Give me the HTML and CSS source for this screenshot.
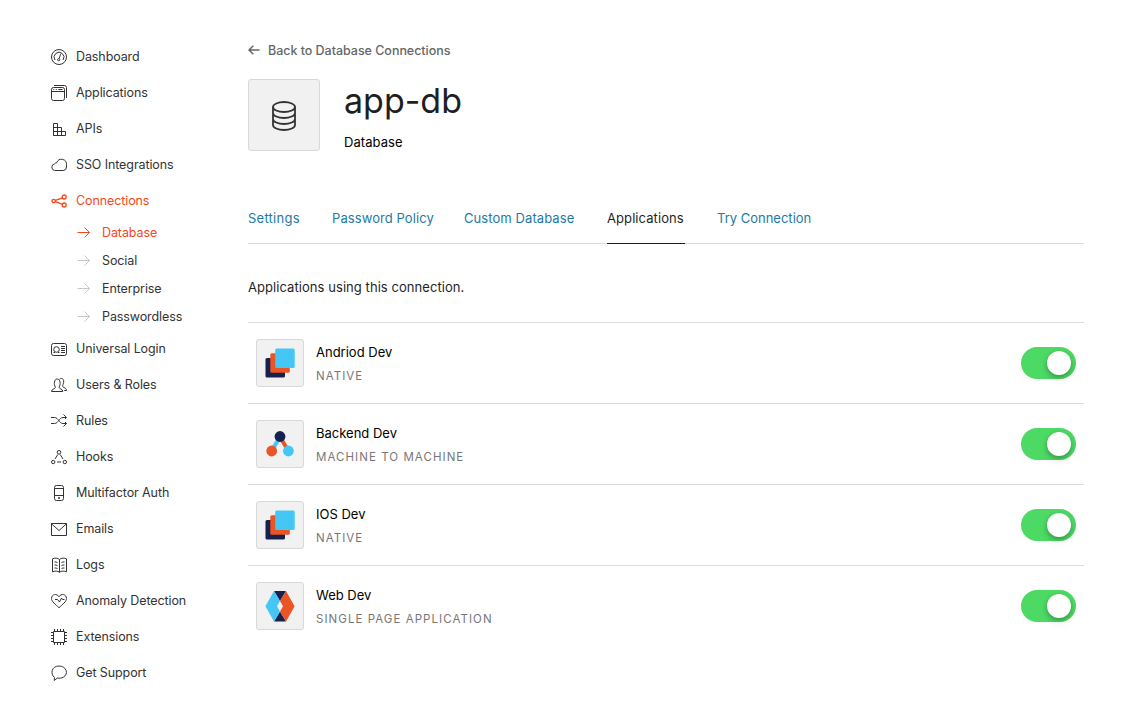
FILE: index.html
```html
<!DOCTYPE html>
<html lang="en">
<head>
<meta charset="utf-8">
<title>app-db</title>
<link rel="stylesheet" href="styles.css">
</head>
<body>
<div class="page">
<nav class="sidebar">
  <a class="item"><svg class="icon" viewBox="0 0 16 16"><circle cx="8" cy="8" r="7.5"/><path d="M4 11A4.900 4.900 0 1 1 12 11M9.600 5.200L8.200 9.500"/><circle cx="7.700" cy="10.700" r="1.100"/></svg>Dashboard</a>
  <a class="item"><svg class="icon" viewBox="0 0 16 16"><rect x=".5" y="2.5" width="13" height="13" rx="2"/><path d="M3 .5h10.500a2 2 0 0 1 2 2V13M.5 6.500h13M2.300 4.500h1M4.800 4.500h1M7.300 4.500h4.200"/></svg>Applications</a>
  <a class="item"><svg class="icon" viewBox="0 0 16 16"><path d="M2.500 2.500h4v12h-4zM2.500 6.500h8v8M2.500 10.500h12v4h-12M10.500 10.500v4"/></svg>APIs</a>
  <a class="item"><svg class="icon" viewBox="0 0 16 16"><path d="M3.700 13.500h8.500a3.400 3.400 0 0 0 3.300-3.500V7.500A5 5 0 0 0 5.800 5.600 3 3 0 0 0 3.600 6.800 3.400 3.400 0 0 0 3.700 13.500z"/></svg>SSO Integrations</a>
  <a class="item active"><svg class="icon connections" viewBox="0 0 16 16"><circle cx="2.700" cy="8" r="1.700"/><circle cx="13.200" cy="4" r="2"/><circle cx="13.200" cy="12" r="2"/><path d="M4.400 7.400l7-2.600M4.400 8.600l7 2.700"/></svg>Connections</a>
  <div class="subnav">
    <a class="subitem active"><svg class="arrow" viewBox="0 0 14 14"><path d="M.5 7.500h12M7.500 2.500l5 5-5 5"/></svg>Database</a>
    <a class="subitem"><svg class="arrow" viewBox="0 0 14 14"><path d="M.5 7.500h12M7.500 2.500l5 5-5 5"/></svg>Social</a>
    <a class="subitem"><svg class="arrow" viewBox="0 0 14 14"><path d="M.5 7.500h12M7.500 2.500l5 5-5 5"/></svg>Enterprise</a>
    <a class="subitem"><svg class="arrow" viewBox="0 0 14 14"><path d="M.5 7.500h12M7.500 2.500l5 5-5 5"/></svg>Passwordless</a>
  </div>
  <a class="item"><svg class="icon" viewBox="0 0 16 16"><rect x=".5" y="2.500" width="15" height="12" rx="2"/><circle cx="5.500" cy="8.500" r="2.800"/><path d="M10 5.500h4M10 7.500h4M10 9.500h4M10 11.500h4M2.500 11.500h1.500M7 11.500h1.500"/></svg>Universal Login</a>
  <a class="item"><svg class="icon" viewBox="0 0 16 16"><path d="M.5 14.500c0-3 4-2.300 4-4.300C2.500 7.500 3 2 6.200 2S10 7.500 8 10.200c0 2 3.800 1.300 3.800 4.300zM8.500 2.300C11.500-.2 14 3 12 7.500c-.6 1.500-.5 2.500.8 3 1.700.6 2.700 1.200 2.700 3h-2.200"/></svg>Users &amp; Roles</a>
  <a class="item"><svg class="icon" viewBox="0 0 16 16"><path d="M0 4.500h3.500c4 0 4.500 6 8.500 6h3.500M0 10.500h3.500c4 0 4.500-6 8.500-6h3.500M12.500 1.500l3 3-1.500 1.500M15.500 10.500l-3 3M14 9l1.500 1.500"/></svg>Rules</a>
  <a class="item"><svg class="icon" viewBox="0 0 16 16"><circle cx="8" cy="3.300" r="1.800"/><circle cx="2.200" cy="13" r="1.700"/><circle cx="13.800" cy="13" r="1.700"/><path d="M6.800 5.500L4 10M9.200 5.500L12 10M6 13h4"/></svg>Hooks</a>
  <a class="item"><svg class="icon" viewBox="0 0 16 16"><rect x="3.500" y=".5" width="9" height="15" rx="2"/><path d="M3.500 3.500h9M3.500 10.500h9M7.500 12.500h1v1h-1z"/></svg>Multifactor Auth</a>
  <a class="item"><svg class="icon" viewBox="0 0 16 16"><path d="M.5 2.500h15v12H.5zM.5 2.800L8 9.500l7.500-6.700"/></svg>Emails</a>
  <a class="item"><svg class="icon" viewBox="0 0 16 16"><path d="M8.500 2.500C7 .8 3.500.8 1.500 1.800v13c2-1 5.500-1 7 .5 1.500-1.500 5-1.500 7-.5v-13c-2-1-5.500-1-7 .7zM8.500 2.500v12.800M3.500 5h1.500l1.500.6M3.500 8h1.500l1.500.6M3.500 11h1.500l1.500.6M13.500 5H12l-1.500.6M13.500 8H12l-1.500.6M13.500 11H12l-1.500.6"/></svg>Logs</a>
  <a class="item"><svg class="icon" viewBox="0 0 16 16"><path d="M8 14.700C4.500 11.500.5 8.500.5 5.500c0-4.500 5.500-5.300 7.500-1.700 2-3.600 7.500-2.800 7.500 1.700 0 3-4 6-7.500 9.200zM4 6.500h2.500l2 2.500 2-4 1 1.500h2"/></svg>Anomaly Detection</a>
  <a class="item"><svg class="icon" viewBox="0 0 16 16"><path d="M2.500 2.500h11v11h-11zM3.500 0v2.500M6.500 0v2.500M9.500 0v2.500M12.500 0v2.500M3.500 13.500V16M6.500 13.500V16M9.500 13.500V16M12.500 13.500V16M0 3.500h2.500M0 6.500h2.500M0 9.500h2.500M0 12.500h2.500M13.500 3.500H16M13.500 6.500H16M13.500 9.500H16M13.500 12.500H16"/></svg>Extensions</a>
  <a class="item"><svg class="icon" viewBox="0 0 16 16"><path d="M3.500 12.500C-1 9 .5 1 8 1s10 8 4.300 11.200c-1.700 1-4 1.200-6 .8L3.200 15.500z"/></svg>Get Support</a>
</nav>
<main class="main">
  <a class="back"><svg class="back-arrow" viewBox="0 0 12 12"><path d="M1 6h10.500M5.300 1.700L1 6l4.300 4.300"/></svg>Back to Database Connections</a>
  <header class="heading">
    <div class="tile tile-large"><svg class="db" viewBox="0 0 24 30"><ellipse cx="12" cy="6" rx="11" ry="5"/><path d="M1 6v18c0 2.800 5 5 11 5s11-2.200 11-5V6M1 12c0 2.800 5 5 11 5s11-2.200 11-5M1 18c0 2.800 5 5 11 5s11-2.200 11-5"/></svg></div>
    <div class="heading-text"><h1 class="title">app-db</h1><div class="kind">Database</div></div>
  </header>
  <div class="tabs">
    <a class="tab t1">Settings</a><a class="tab t2">Password Policy</a><a class="tab t3">Custom Database</a><a class="tab t4 current">Applications</a><a class="tab t5">Try Connection</a>
  </div>
  <p class="intro">Applications using this connection.</p>
  <div class="rows">
    <div class="row">
      <div class="tile"><svg class="logo" viewBox="0 0 48 48"><rect x="9.500" y="19" width="19.500" height="19.500" rx="1.500" fill="#16214d"/><rect x="14.300" y="14.300" width="19.500" height="19.500" rx="1.500" fill="#eb5424"/><rect x="19.200" y="9.500" width="19.500" height="19.500" rx="1.500" fill="#44c7f4"/></svg></div>
      <div class="info"><div class="name">Andriod Dev</div><div class="type">NATIVE</div></div>
      <span class="toggle"><span class="knob"></span></span>
    </div>
    <div class="row">
      <div class="tile"><svg class="logo" viewBox="0 0 48 48"><path d="M24 17l-8.500 14" stroke="#44c7f4" stroke-width="4"/><path d="M24 17l8.500 14" stroke="#eb5424" stroke-width="4"/><circle cx="24" cy="16.500" r="5.400" fill="#16214d"/><circle cx="15.700" cy="31" r="5.400" fill="#eb5424"/><circle cx="32.400" cy="31" r="5.400" fill="#44c7f4"/></svg></div>
      <div class="info"><div class="name">Backend Dev</div><div class="type">MACHINE TO MACHINE</div></div>
      <span class="toggle"><span class="knob"></span></span>
    </div>
    <div class="row">
      <div class="tile"><svg class="logo" viewBox="0 0 48 48"><rect x="9.500" y="19" width="19.500" height="19.500" rx="1.500" fill="#16214d"/><rect x="14.300" y="14.300" width="19.500" height="19.500" rx="1.500" fill="#eb5424"/><rect x="19.200" y="9.500" width="19.500" height="19.500" rx="1.500" fill="#44c7f4"/></svg></div>
      <div class="info"><div class="name">IOS Dev</div><div class="type">NATIVE</div></div>
      <span class="toggle"><span class="knob"></span></span>
    </div>
    <div class="row">
      <div class="tile"><svg class="logo" viewBox="0 0 48 48"><path d="M18 9h12l-6 10zM18 39.500h12l-6-10z" fill="#16214d"/><path d="M18 9l6 10-3 5.300 3 5.200-6 10-8.600-15.200z" fill="#44c7f4"/><path d="M30 9l-6 10 3 5.300-3 5.200 6 10 8.600-15.200z" fill="#eb5424"/></svg></div>
      <div class="info"><div class="name">Web Dev</div><div class="type">SINGLE PAGE APPLICATION</div></div>
      <span class="toggle"><span class="knob"></span></span>
    </div>
  </div>
</main>
</div>
</body>
</html>
```
FILE: styles.css
```css
* { box-sizing: border-box; }
body { margin: 0; background: #fff; color: #1f1f1f; font-family: Inter, "Liberation Sans", sans-serif; font-size: 13px; }
.page { display: flex; height: 713px; overflow: hidden; padding: 38px 59px 0 51px; }
.sidebar { width: 197px; flex: none; font-size: 12.500px; letter-spacing: -.1px; color: #333; }
.item { display: flex; align-items: center; height: 36px; gap: 9px; }
.icon { width: 16px; height: 16px; margin-top: 2px; fill: none; stroke: currentColor; stroke-width: 1; }
.connections { stroke-width: 1.3; }
.active { color: #f9461c; }
.subnav { padding-left: 26px; }
.subitem { display: flex; align-items: center; height: 28px; gap: 11px; }
.arrow { width: 14px; height: 14px; fill: none; stroke: #c8c8c8; }
.active .arrow { stroke: currentColor; }
.main { flex: 1; }
.back { display: flex; align-items: center; height: 24px; gap: 8px; font-size: 12.500px; font-weight: 500; letter-spacing: -.03px; color: #666; }
.back-arrow { width: 12px; height: 12px; fill: none; stroke: currentColor; stroke-width: 1.5; }
.heading { display: flex; gap: 24px; margin-top: 17px; height: 72px; }
.tile { display: flex; align-items: center; justify-content: center; flex: none; width: 48px; height: 48px; background: #f1f1f1; border: 1px solid #d8d8d8; border-radius: 3px; }
.tile-large { width: 72px; height: 72px; }
.db { width: 24px; height: 30px; margin-top: 2px; fill: none; stroke: #333; stroke-width: 1.8; }
.title { margin: 0; font-size: 34px; line-height: 44px; font-weight: 400; }
.kind { margin-top: 9px; line-height: 20px; font-size: 13px; letter-spacing: .05px; color: #000; }
.tabs { display: flex; gap: 32px; height: 51px; margin-top: 42px; border-bottom: 1px solid #dcdcdc; }
.tab { height: 51px; line-height: 50px; color: #1c7aa5; white-space: nowrap; letter-spacing: .08px; }
.current { color: #1f1f1f; border-bottom: 1px solid #1f1f1f; }
.t1 { width: 52px; letter-spacing: .25px; } .t2 { width: 100px; } .t3 { width: 111px; } .t4 { width: 78px; } .t5 { width: 95px; letter-spacing: 0; }
.intro { margin: 33px 0 25px; line-height: 20px; letter-spacing: .06px; }
.row { display: flex; align-items: center; height: 81px; padding: 0 8px; border-top: 1px solid #dcdcdc; }
.logo { width: 48px; height: 48px; flex: none; fill: none; }
.info { flex: 1; margin-left: 12px; padding-top: 2px; }
.name { line-height: 20px; color: #000; }
.type { margin-top: 4px; line-height: 20px; font-size: 11.500px; letter-spacing: 1.050px; color: #777; }
.toggle { display: flex; align-items: center; justify-content: flex-end; width: 55px; height: 32px; padding-right: 5px; border-radius: 16px; background: #4cd964; }
.knob { width: 24px; height: 24px; border-radius: 50%; background: #fff; box-shadow: 0 2px 5px rgba(0,0,0,.3), 0 8px 8px rgba(0,0,0,.03); }
```
